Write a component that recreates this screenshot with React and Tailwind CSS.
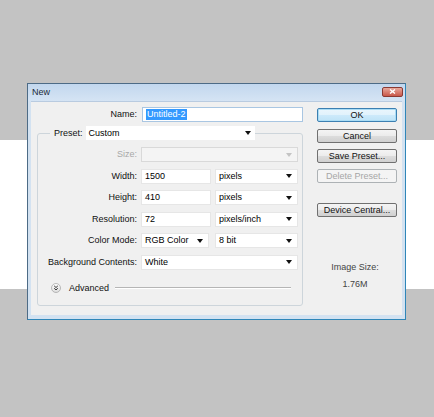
import React from 'react';

const font = { fontFamily: '"Liberation Sans", Arial, sans-serif' };

function Arrow({ disabled }) {
  return (
    <svg width="6" height="4" viewBox="0 0 6 4" className="shrink-0">
      <polygon points="0,0 6,0 3,4" fill={disabled ? '#c4c4c4' : '#111'} />
    </svg>
  );
}

function Select({ value, width, disabled }) {
  return (
    <div
      className={`flex h-[15px] items-center justify-between pl-[3px] pr-[5px] border ${
        disabled ? 'bg-[#f4f4f4] border-[#d9d9d9]' : 'bg-white border-[#e6e6e6]'
      }`}
      style={{ width }}
    >
      <span className="leading-none">{value}</span>
      <Arrow disabled={disabled} />
    </div>
  );
}

function TextBox({ value, width }) {
  return (
    <div
      className="flex h-[15px] items-center pl-[3px] bg-white border border-[#e6e6e6]"
      style={{ width }}
    >
      <span className="leading-none">{value}</span>
    </div>
  );
}

function Row({ label, disabled, children }) {
  return (
    <div className="flex h-[15px] items-center">
      <div className={`w-[99px] text-right leading-none ${disabled ? 'text-[#a8a8a8]' : 'text-[#111]'}`}>
        {label}
      </div>
      <div className="ml-[4px] flex gap-[4px]">{children}</div>
    </div>
  );
}

function Button({ children, isDefault, disabled, className = '' }) {
  let look =
    'border-[#707070] text-[#111] bg-[linear-gradient(to_bottom,#f4f4f4_0%,#ebebeb_50%,#dddddd_50%,#d0d0d0_100%)]';
  if (isDefault)
    look =
      'border-[#3c7fb1] text-[#111] bg-[linear-gradient(to_bottom,#eaf6fd_0%,#e1f2fc_50%,#cdeafb_50%,#bfe3f7_100%)] shadow-[inset_0_0_0_1px_#a9dcf5]';
  if (disabled) look = 'border-[#adb2b5] text-[#a6a6a6] bg-[#f4f4f4]';
  return (
    <div
      className={`flex h-[14px] w-[80px] items-center justify-center rounded-[2px] border leading-none ${look} ${className}`}
    >
      {children}
    </div>
  );
}

export default function App() {
  return (
    <div
      className="min-h-screen w-full pl-[27px] pt-[83px] bg-[linear-gradient(to_bottom,#c3c3c3_140px,#ffffff_140px,#ffffff_289px,#c3c3c3_289px)]"
      style={font}
    >
      {/* Dialog window */}
      <div className="w-[379px] h-[237px] border border-[#4d6b86] border-b-[#2f86b8] border-r-[#2f86b8] bg-[#d3e2f1] px-[3px] pb-[4px] flex flex-col text-[9px]">
        {/* Title bar */}
        <div className="h-[17px] -mx-[3px] px-[4px] flex items-center justify-between bg-[linear-gradient(to_bottom,#c2d7ee,#d5e4f4)]">
          <span className="text-[#1b2a3a] leading-none">New</span>
          <div className="mr-[-2px] mt-[-2px] flex h-[10px] w-[21px] items-center justify-center rounded-[2px] border border-[#8a3a33] bg-[linear-gradient(to_bottom,#e8a89c,#c9584a)]">
            <svg width="7" height="5" viewBox="0 0 7 5">
              <path d="M1 0.5 L6 4.5 M6 0.5 L1 4.5" stroke="#fff" strokeWidth="1.4" />
            </svg>
          </div>
        </div>

        {/* Client area */}
        <div className="flex-1 flex bg-[#f0f0f0] border-t border-[#b9cbe0]">
          {/* Left column */}
          <div className="w-[286px] flex flex-col">
            {/* Name */}
            <div className="mt-[5px] flex h-[15px] items-center">
              <div className="w-[106px] text-right text-[#111] leading-none">Name:</div>
              <div className="ml-[5px] flex h-[15px] w-[161px] items-center pl-[3px] bg-white border border-[#a9c6e2]">
                <span className="bg-[#3399ff] text-white leading-[11px] px-[1px]">Untitled-2</span>
              </div>
            </div>

            {/* Group box */}
            <div className="mt-[11px] ml-[6px] w-[266px] h-[173px] border border-[#cdd5db] rounded-[3px] flex flex-col">
              {/* Preset */}
              <div className="-mt-[8px] flex h-[14px] items-center">
                <div className="ml-[12px] pl-[4px] pr-[3px] bg-[#f0f0f0] text-[#111] leading-none">Preset:</div>
                <div className="flex h-[14px] w-[169px] items-center justify-between pl-[3px] pr-[4px] bg-white">
                  <span className="leading-none">Custom</span>
                  <Arrow />
                </div>
              </div>

              <div className="mt-[7px] flex flex-col gap-[6.6px]">
                <Row label="Size:" disabled>
                  <Select value="" width={157} disabled />
                </Row>
                <Row label="Width:">
                  <TextBox value="1500" width={70} />
                  <Select value="pixels" width={83} />
                </Row>
                <Row label="Height:">
                  <TextBox value="410" width={70} />
                  <Select value="pixels" width={83} />
                </Row>
                <Row label="Resolution:">
                  <TextBox value="72" width={70} />
                  <Select value="pixels/inch" width={83} />
                </Row>
                <Row label="Color Mode:">
                  <Select value="RGB Color" width={68} />
                  <div className="ml-[2px]">
                    <Select value="8 bit" width={83} />
                  </div>
                </Row>
                <Row label="Background Contents:">
                  <Select value="White" width={157} />
                </Row>
              </div>

              {/* Advanced */}
              <div className="mt-[13px] flex h-[11px] items-center">
                <svg width="10" height="10" viewBox="0 0 10 10" className="ml-[13px]">
                  <defs>
                    <linearGradient id="adv" x1="0" y1="0" x2="0" y2="1">
                      <stop offset="0" stopColor="#ffffff" />
                      <stop offset="1" stopColor="#dcdcdc" />
                    </linearGradient>
                  </defs>
                  <circle cx="5" cy="5" r="4.5" fill="url(#adv)" stroke="#a9a9a9" strokeWidth="0.8" />
                  <path d="M3.2 2.9 L5 4.5 L6.8 2.9 M3.2 5.3 L5 6.9 L6.8 5.3" fill="none" stroke="#333" strokeWidth="1" />
                </svg>
                <span className="ml-[8px] text-[#111] leading-none">Advanced</span>
                <div className="ml-[6px] w-[176px] h-[2px] border-t border-[#b5b5b5] border-b border-b-white" />
              </div>
            </div>
          </div>

          {/* Right column */}
          <div className="w-[80px] flex flex-col">
            <Button isDefault className="mt-[6px]">OK</Button>
            <Button className="mt-[7px]">Cancel</Button>
            <Button className="mt-[6px]">Save Preset...</Button>
            <Button disabled className="mt-[6px]">Delete Preset...</Button>
            <Button className="mt-[20px]">Device Central...</Button>
            <div className="mt-[46px] w-[76px] text-center text-[#444] leading-none">Image Size:</div>
            <div className="mt-[8px] w-[76px] text-center text-[#444] leading-none">1.76M</div>
          </div>
        </div>
      </div>
    </div>
  );
}
